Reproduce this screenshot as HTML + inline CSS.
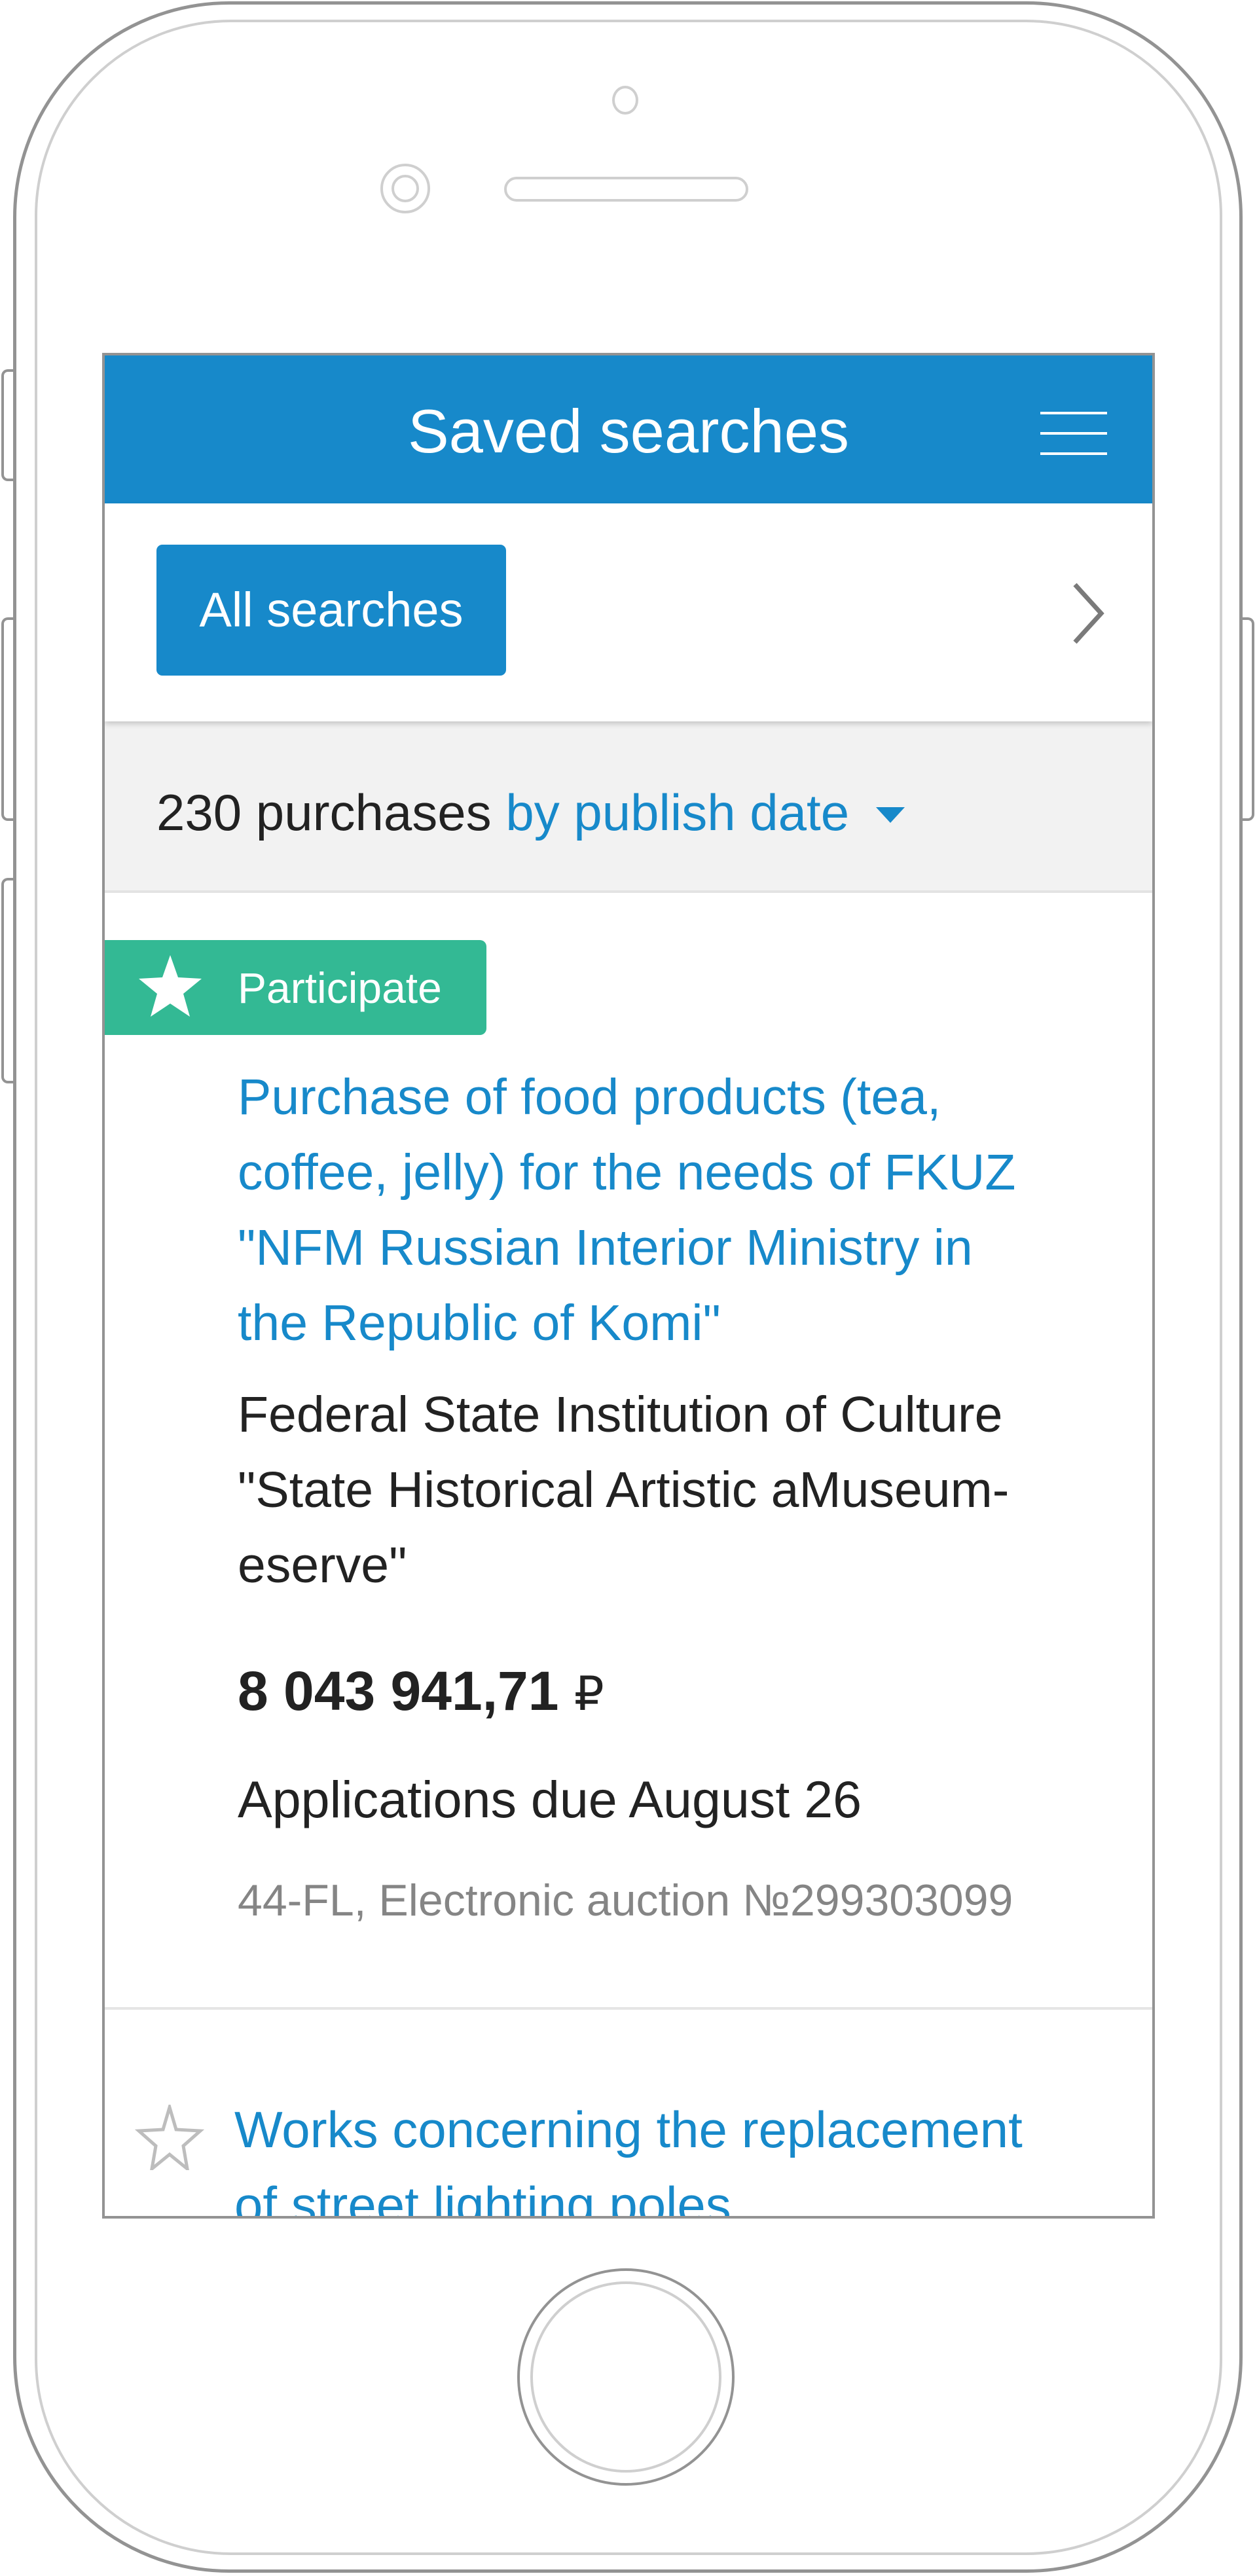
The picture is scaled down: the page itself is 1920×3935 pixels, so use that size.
<!DOCTYPE html>
<html><head><meta charset="utf-8">
<style>
*{margin:0;padding:0;box-sizing:border-box}
body{width:1920px;height:3935px;background:#fff;position:relative;overflow:hidden;font-family:"Liberation Sans",sans-serif}
.a{position:absolute}
.t{position:absolute;white-space:nowrap}
</style></head><body>
<div class="a" style="left:20px;top:2px;width:1878px;height:3928px;border:5px solid #939393;border-radius:330px"></div>
<div class="a" style="left:53px;top:30px;width:1814px;height:3873px;border:4px solid #cfcfcf;border-radius:300px"></div>
<div class="a" style="left:2px;top:564px;width:20px;height:171px;border:4px solid #939393;border-right:none;border-radius:10px 0 0 10px"></div>
<div class="a" style="left:2px;top:943px;width:20px;height:311px;border:4px solid #939393;border-right:none;border-radius:10px 0 0 10px"></div>
<div class="a" style="left:2px;top:1341px;width:20px;height:314px;border:4px solid #939393;border-right:none;border-radius:10px 0 0 10px"></div>
<div class="a" style="left:1896px;top:943px;width:20px;height:311px;border:4px solid #939393;border-left:none;border-radius:0 10px 10px 0"></div>
<div class="a" style="left:935px;top:131px;width:40px;height:44px;border:4px solid #cfcfcf;border-radius:50%"></div>
<div class="a" style="left:581px;top:250px;width:76px;height:76px;border:4px solid #cfcfcf;border-radius:50%"></div>
<div class="a" style="left:598px;top:267px;width:42px;height:42px;border:4px solid #cfcfcf;border-radius:50%"></div>
<div class="a" style="left:770px;top:270px;width:373px;height:38px;border:4px solid #cfcfcf;border-radius:19px"></div>
<div class="a" style="left:790px;top:3465px;width:332px;height:332px;border:4px solid #939393;border-radius:50%"></div>
<div class="a" style="left:810px;top:3485px;width:292px;height:292px;border:4px solid #cfcfcf;border-radius:50%"></div>

<div class="a" style="left:156px;top:539px;width:1608px;height:2850px;border:4px solid #939393;overflow:hidden;background:#fff">
  <div class="a" style="left:0;top:0;width:1600px;height:226px;background:#1789ca"></div>
  <div class="t" style="left:0;width:1600px;top:64px;line-height:104px;font-size:94px;color:#fff;text-align:center">Saved searches</div>
  <div class="a" style="left:1429px;top:86px;width:102px;height:4px;background:#fff"></div>
  <div class="a" style="left:1429px;top:117px;width:102px;height:4px;background:#fff"></div>
  <div class="a" style="left:1429px;top:148px;width:102px;height:4px;background:#fff"></div>
  <div class="a" style="left:0;top:226px;width:1600px;height:333px;background:#fff;box-shadow:0 4px 8px rgba(0,0,0,0.18);z-index:2">
    <div class="a" style="left:79px;top:63px;width:534px;height:200px;background:#1789ca;border-radius:9px"></div>
    <div class="t" style="left:79px;width:534px;top:63px;line-height:200px;font-size:74px;color:#fff;text-align:center">All searches</div>
    <svg class="a" style="left:1476px;top:120px" width="60" height="96" viewBox="0 0 60 96"><path d="M6 4 L46 48 L6 92" fill="none" stroke="#7a7a7a" stroke-width="7"/></svg>
  </div>
  <div class="a" style="left:0;top:559px;width:1600px;height:262px;background:#f2f2f2;border-bottom:4px solid #e3e3e3"></div>
  <div class="t" style="left:79px;top:648px;line-height:100px;font-size:78px;color:#222">230 purchases <span style="color:#1789ca">by publish date</span></div>
  <svg class="a" style="left:1178px;top:690px" width="44" height="26" viewBox="0 0 44 26"><path d="M0 0 L44 0 L22 24 Z" fill="#1789ca"/></svg>

  <div class="a" style="left:0;top:893px;width:583px;height:145px;background:#33b994;border-radius:0 10px 10px 0"></div>
  <svg class="a" style="left:50px;top:914px" width="100" height="98" viewBox="0 0 100 98"><path d="M50 2 L62 36 L98 38 L70 61 L80 96 L50 76 L20 96 L30 61 L2 38 L38 36 Z" fill="#fff"/></svg>
  <div class="t" style="left:203px;top:916px;line-height:100px;font-size:66px;color:#fff">Participate</div>
  <div class="t" style="left:203px;top:1076px;line-height:115px;font-size:77px;color:#1789ca">Purchase of food products (tea,<br>coffee, jelly) for the needs of FKUZ<br>"NFM Russian Interior Ministry in<br>the Republic of Komi"</div>
  <div class="t" style="left:203px;top:1561px;line-height:115px;font-size:77px;color:#222">Federal State Institution of Culture<br>"State Historical Artistic aMuseum-<br>eserve"</div>
  <div class="t" style="left:203px;top:1990px;line-height:100px;font-size:84px;color:#222;font-weight:bold">8 043 941,71 <span style="font-weight:normal;font-size:72px">₽</span></div>
  <div class="t" style="left:203px;top:2156px;line-height:100px;font-size:79px;color:#222">Applications due August 26</div>
  <div class="t" style="left:203px;top:2315px;line-height:90px;font-size:68px;color:#858585">44-FL, Electronic auction №299303099</div>
  <div class="a" style="left:0;top:2523px;width:1600px;height:4px;background:#e5e5e5"></div>

  <svg class="a" style="left:46px;top:2672px" width="106" height="100" viewBox="0 0 106 100"><path d="M53 4 L63 38 L100 40 L74 63 L80 98 L53 76 L26 98 L32 63 L6 40 L43 38 Z" fill="none" stroke="#bdbdbd" stroke-width="5"/></svg>
  <div class="t" style="left:198px;top:2653px;line-height:115px;font-size:78px;color:#1789ca">Works concerning the replacement<br>of street lighting poles.</div>
</div>
</body></html>
